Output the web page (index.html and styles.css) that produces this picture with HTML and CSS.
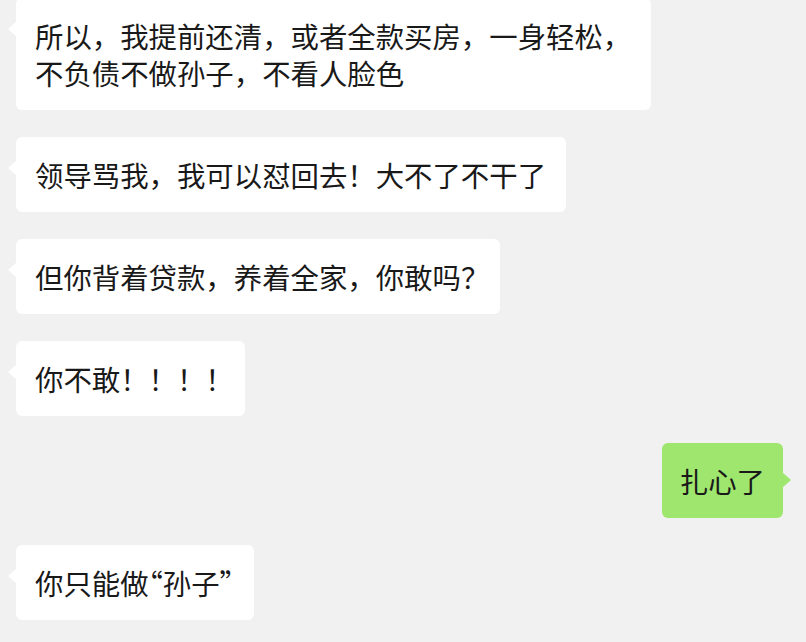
FILE: index.html
```html
<!DOCTYPE html>
<html lang="zh">
<head>
<meta charset="utf-8">
<link rel="stylesheet" href="styles.css">
</head>
<body>
<div class="chat">
  <div class="row left first"><div class="bubble">所以，我提前还清，或者全款买房，一身轻松，<br>不负债不做孙子，不看人脸色</div></div>
  <div class="row left"><div class="bubble">领导骂我，我可以怼回去！大不了不干了</div></div>
  <div class="row left"><div class="bubble">但你背着贷款，养着全家，你敢吗<span class="half end">？</span></div></div>
  <div class="row left"><div class="bubble">你不敢！！！<span class="half end">！</span></div></div>
  <div class="row right"><div class="bubble green">扎心了</div></div>
  <div class="row left"><div class="bubble">你只能做<span class="half">“</span>孙子<span class="half">”</span></div></div>
</div>
</body>
</html>
```
FILE: styles.css
```css
html, body {
  margin: 0;
  padding: 0;
  background: #f1f1f1;
}
.chat {
  display: flex;
  flex-direction: column;
  gap: 27px;
  padding: 0 23px 0 16px;
  font-family: "Noto Sans CJK SC", "Noto Sans", sans-serif;
  font-size: 28.4px;
  line-height: 37px;
  color: #191919;
}
.row {
  display: flex;
}
.row.first {
  margin-top: -2px;
}
.row.right {
  justify-content: flex-end;
}
.bubble {
  position: relative;
  background: #ffffff;
  border-radius: 6px;
  padding: 19px 20px 19px 19px;
}
.half {
  font-feature-settings: "halt";
}
.end {
  padding-right: 5px;
}
.bubble::before {
  content: "";
  position: absolute;
  top: 23px;
  left: -8px;
  width: 0;
  height: 0;
  border-top: 8px solid transparent;
  border-bottom: 8px solid transparent;
  border-right: 9px solid #ffffff;
}
.bubble.green {
  background: #9fe66f;
  padding: 19px 18px 19px 18px;
}
.bubble.green::before {
  left: auto;
  right: -8px;
  top: 29px;
  border-right: none;
  border-left: 9px solid #9fe66f;
}
```
